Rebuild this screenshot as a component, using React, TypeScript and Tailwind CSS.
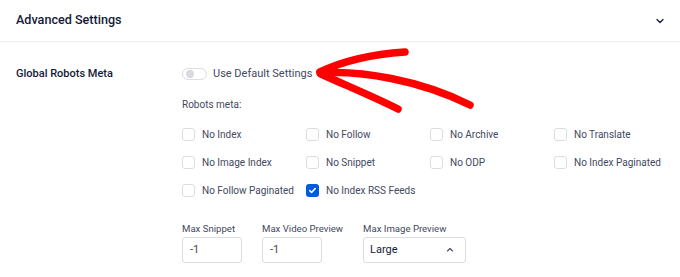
import React from 'react';

const robots = [
  { label: 'No Index', checked: false },
  { label: 'No Follow', checked: false },
  { label: 'No Archive', checked: false },
  { label: 'No Translate', checked: false },
  { label: 'No Image Index', checked: false },
  { label: 'No Snippet', checked: false },
  { label: 'No ODP', checked: false },
  { label: 'No Index Paginated', checked: false },
  { label: 'No Follow Paginated', checked: false },
  { label: 'No Index RSS Feeds', checked: true },
];

function Checkbox({ label, checked }: { label: string; checked: boolean }) {
  return (
    <div className="flex items-center h-[28px] gap-[7px]">
      {checked ? (
        <span className="w-[13px] h-[13px] rounded-[3px] bg-[#005ae0] flex items-center justify-center">
          <svg width="9" height="9" viewBox="0 0 10 10" fill="none">
            <path d="M2 5.2l2 2 4-4.4" stroke="#fff" strokeWidth="1.8" strokeLinecap="round" strokeLinejoin="round" />
          </svg>
        </span>
      ) : (
        <span className="w-[13px] h-[13px] rounded-[3px] border border-[#dcdde1] bg-white" />
      )}
      <span className="text-[10px] text-[#434960]">{label}</span>
    </div>
  );
}

export default function App() {
  return (
    <div className="relative w-[680px] h-[277px] overflow-hidden bg-white font-['Roboto',sans-serif]">
      <div className="h-[42px] border-b border-[#ebecef] flex items-center justify-between pl-4 pr-[15px]">
        <span className="text-[12.6px] font-medium text-[#141b38]">Advanced Settings</span>
        <svg width="10" height="10" viewBox="0 0 10 10" fill="none">
          <path d="M2 3.5l3 3 3-3" stroke="#141b38" strokeWidth="1.3" strokeLinecap="round" strokeLinejoin="round" />
        </svg>
      </div>

      <div className="flex pl-4 pt-[20px]">
        <div className="w-[166px] h-[24px] flex items-center text-[11px] font-medium text-[#141b38]">
          Global Robots Meta
        </div>
        <div className="flex flex-col">
          <div className="h-[24px] flex items-center gap-[6px]">
            <span className="w-[25px] h-[12px] rounded-full border border-[#dcdde1] bg-white flex items-center pl-[3px]">
              <span className="w-[8px] h-[8px] rounded-full bg-[#d9dadf]" />
            </span>
            <span className="text-[11px] text-[#434960]">Use Default Settings</span>
          </div>

          <div className="mt-[11px] h-[14px] flex items-center text-[10px] text-[#434960]">Robots meta:</div>

          <div className="mt-[9px] grid grid-cols-[124px_124px_124px_124px]">
            {robots.map((r) => (
              <Checkbox key={r.label} label={r.label} checked={r.checked} />
            ))}
          </div>

          <div className="mt-[18px] flex gap-5">
            <div className="flex flex-col">
              <span className="h-[14px] flex items-center text-[9.6px] text-[#434960] mb-px">Max Snippet</span>
              <div className="w-[60px] h-[26px] border border-[#dcdde1] rounded-[3px] flex items-center pl-[7px] text-[11px] text-[#434960]">
                -1
              </div>
            </div>
            <div className="flex flex-col">
              <span className="h-[14px] flex items-center text-[9.6px] text-[#434960] mb-px">Max Video Preview</span>
              <div className="w-[60px] h-[26px] border border-[#dcdde1] rounded-[3px] flex items-center pl-[7px] text-[11px] text-[#434960]">
                -1
              </div>
            </div>
            <div className="flex flex-col">
              <span className="h-[14px] flex items-center text-[9.6px] text-[#434960] mb-px">Max Image Preview</span>
              <div className="w-[103px] h-[26px] border border-[#dcdde1] rounded-[3px] flex items-center justify-between pl-[6px] pr-[11px] text-[11px] text-[#141b38]">
                Large
                <svg width="8" height="8" viewBox="0 0 8 8" fill="none">
                  <path d="M1.5 5l2.5-2.5 2.5 2.5" stroke="#434960" strokeWidth="1.1" strokeLinecap="round" strokeLinejoin="round" />
                </svg>
              </div>
            </div>
          </div>
        </div>
      </div>

      <svg className="absolute inset-0 pointer-events-none" width="680" height="277" viewBox="0 0 680 277" fill="none">
        <g stroke="#ff0000" strokeWidth="7.5" strokeLinecap="round" strokeLinejoin="round">
          <path d="M320 73 C 360 70, 420 80, 470 105" />
          <path d="M320 72 C 345 60, 375 54, 405 52" />
          <path d="M321 74 C 345 85, 372 96, 398 109" />
        </g>
      </svg>
    </div>
  );
}
